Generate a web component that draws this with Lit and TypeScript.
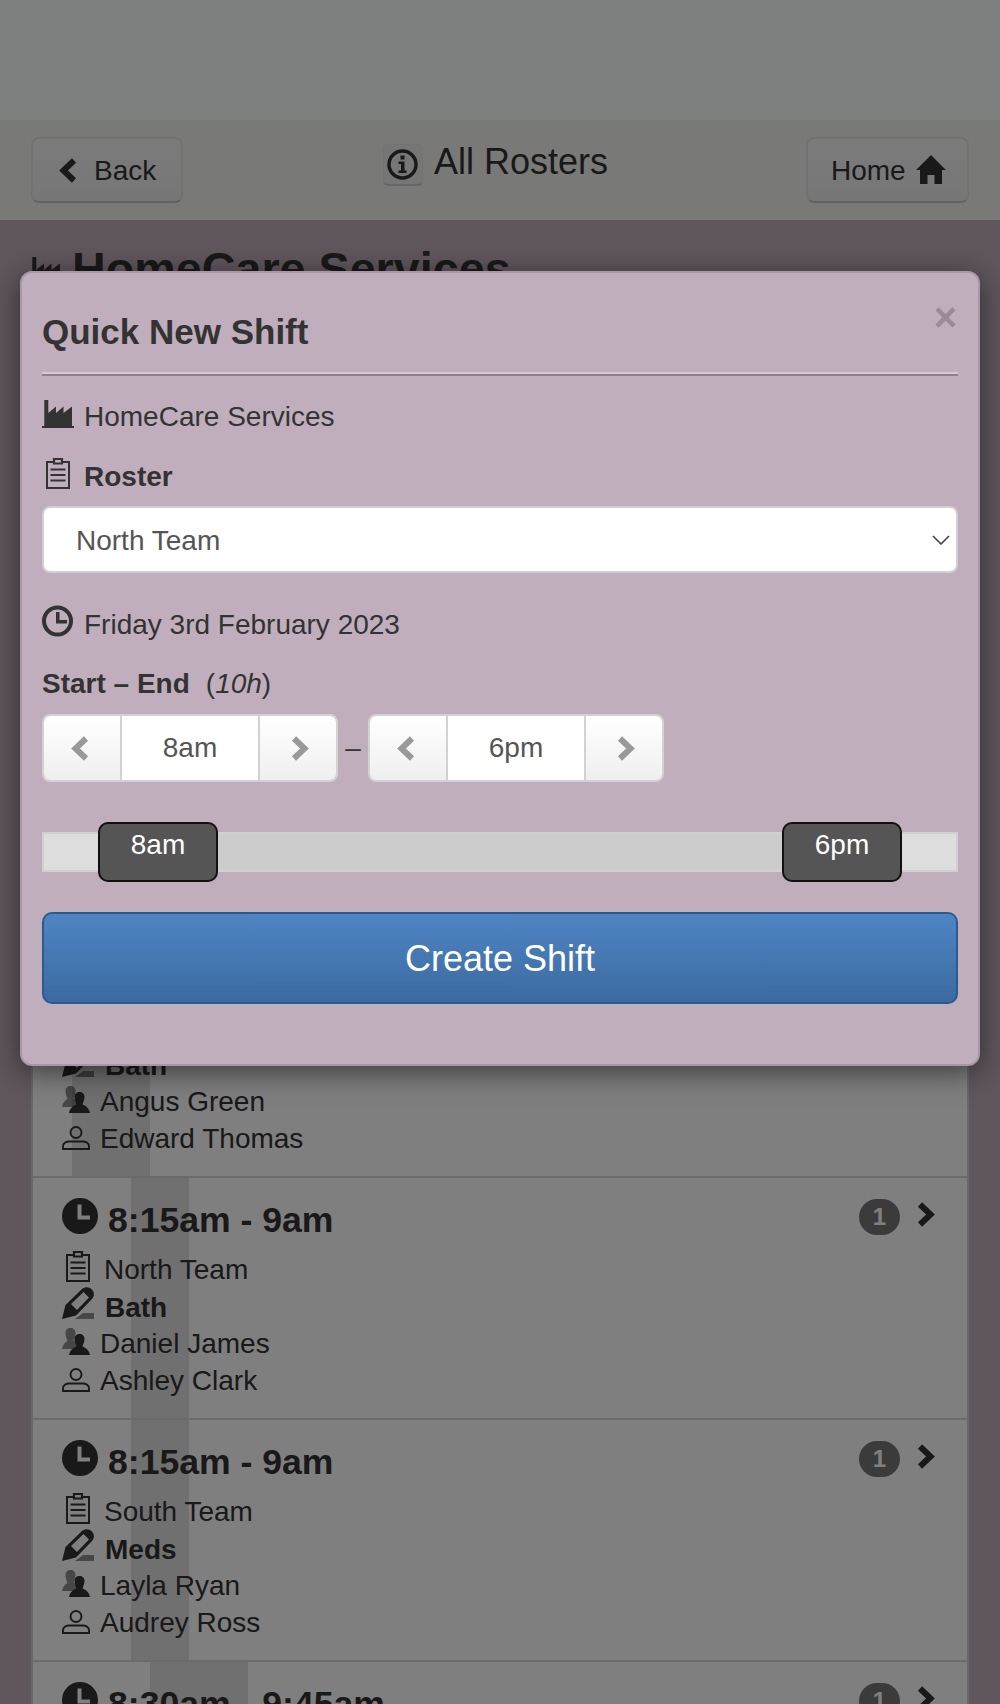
import { LitElement, html, css } from "lit";
import { customElement } from "lit/decorators.js";

const icoClockFill = html`<svg class="i" width="36" height="36" viewBox="0 0 36 36"><path fill="currentColor" fill-rule="evenodd" d="M18 0a18 18 0 1 0 0 36a18 18 0 1 0 0-36z M15.500 6.500h4v11h8.500v4H15.500z"/></svg>`;
const icoClockLine = html`<svg class="i" width="31" height="32" viewBox="0 0 31 32"><circle cx="15.500" cy="16" r="13.500" fill="none" stroke="currentColor" stroke-width="4"/><path fill="currentColor" d="M14 7h3.500v8H25v3.500H14z"/></svg>`;
const icoFactory = html`<svg class="i" width="32" height="28" viewBox="0 0 32 28"><path fill="currentColor" d="M0 28v-2h2.300V0h4v13L14 6.500V13l7.500-6.500V13L30 6.500V26h2v2z"/></svg>`;
const icoClip = html`<svg class="i" width="24" height="32" viewBox="0 0 24 32"><path fill="none" stroke="currentColor" stroke-width="2" d="M7 5H1v26h22V5H17"/><path fill="none" stroke="currentColor" stroke-width="2.200" d="M8 6.500V2h8v4.500z"/><path fill="none" stroke="currentColor" stroke-width="2" d="M4.500 12.500h15M4.500 18h15M4.500 23.500h15"/></svg>`;
const icoPencil = html`<svg class="i" width="32" height="32" viewBox="0 0 32 32"><path fill="currentColor" fill-rule="evenodd" d="M0 32 3.500 18 20 2C23-.5 27-.5 30 2.500c2.500 3 2.500 6.500 0 9.500L14 28.500zM9 17 15 23 27 10.500 21.500 5z"/><path fill="currentColor" opacity=".55" d="M13 32 21 26H32v6z"/></svg>`;
const icoUsers = html`<svg class="i" width="28" height="27" viewBox="0 0 28 27"><path fill="currentColor" opacity=".55" d="M3.500 5C3.500 2 5.500 0 8.500 0s5 2 5 5c0 3-1.500 6-2 7.500l3.500 2V21H0c.5-4 3-6.500 5.500-8C5 12 3.500 8 3.500 5z"/><path fill="currentColor" d="M12.500 11c0-3 2-5 5-5s5 2 5 5c0 3-1.500 6-2 7.500 3.500 1.500 6.500 3.500 7.500 8.500H7c1-5 4-7 7.500-8.500-.5-1.500-2-4.500-2-7.500z"/></svg>`;
const icoUser = html`<svg class="i" width="28" height="24" viewBox="0 0 28 24"><circle cx="14" cy="6.500" r="5.500" fill="none" stroke="currentColor" stroke-width="1.900"/><path fill="none" stroke="currentColor" stroke-width="1.900" d="M1 23v-3c0-2.500 3-4.500 6-4.500h14c3 0 6 2 6 4.500v3z"/></svg>`;
const chevR = (c: string) => html`<svg class="i ${c}" width="18" height="25" viewBox="0 0 18 25"><path fill="none" stroke="currentColor" stroke-width="6" d="M3 2.500 13.500 12.500 3 22.500"/></svg>`;
const chevL = (c: string) => html`<svg class="i ${c}" width="18" height="25" viewBox="0 0 18 25"><path fill="none" stroke="currentColor" stroke-width="6" d="M15 2.500 4.500 12.500 15 22.500"/></svg>`;

interface Row { time: string; team?: string; job?: string; a?: string; b?: string; from: number; to: number; }
const rows: Row[] = [
  { time: "7:30am - 8:30am", team: "North Team", job: "Bath", a: "Angus Green", b: "Edward Thomas", from: 39, to: 117 },
  { time: "8:15am - 9am", team: "North Team", job: "Bath", a: "Daniel James", b: "Ashley Clark", from: 98, to: 156 },
  { time: "8:15am - 9am", team: "South Team", job: "Meds", a: "Layla Ryan", b: "Audrey Ross", from: 98, to: 156 },
  { time: "8:30am - 9:45am", from: 117, to: 215 },
];

@customElement("app-root")
export class AppRoot extends LitElement {
  static styles = css`
    :host { display: block; position: relative; width: 1000px; height: 1704px; overflow: hidden; background: #c1aebd;
      font-family: "Liberation Sans", Arial, sans-serif; font-size: 28px; color: #333; }
    .i { display: block; flex: none; }
    .top { height: 120px; background: #f8fefa; }
    .nav { height: 100px; background: #f3f5f1; border-bottom: 2px solid #b4b4b4; display: flex; justify-content: space-between; align-items: flex-start; padding: 0 31px; }
    .btn { height: 66px; box-sizing: border-box; margin-top: 17px; display: flex; align-items: center; background: linear-gradient(#f6f6f6, #eeeeee); border: 2px solid #e4e4e4; border-bottom-color: #c4c4c4; border-radius: 8px; color: #333; }
    .btn span { padding-top: 2px; }
    .back { width: 152px; padding-left: 26px; gap: 17px; }
    .home { width: 163px; padding-left: 23px; gap: 10px; }
    .center { display: flex; align-items: flex-start; gap: 11px; margin-left: 2px; }
    .info { margin-top: 24px; width: 40px; height: 42px; box-sizing: border-box; background: #ededed; border: 1px solid #e6e6e6; border-bottom: 2px solid #cdcdcd; border-radius: 5px; display: flex; align-items: center; justify-content: center; }
    .center h3 { margin: 20px 0 0; font-size: 36px; font-weight: 400; line-height: 44px; }
    .ptitle { display: flex; align-items: center; gap: 10px; margin: 20px 0 0 30px; height: 54px; }
    .ptitle .i { margin-top: 4px; }
    .ptitle h2 { margin: 0; font-size: 46.700px; font-weight: 700; line-height: 54px; color: #333; }
    .list { margin: 640px 31px 0 31px; border: solid #d0d0d0; border-width: 0 2px; background: #fff; }
    .row { height: 240px; border-bottom: 2px solid #d6d6d6; padding: 0 32px 0 29px; display: grid; grid-template-columns: 1fr auto; align-content: start; }
    .head { display: flex; align-items: center; gap: 10px; margin-top: 18px; height: 44px; font-size: 35.600px; font-weight: 700; }
    .head .i { margin-bottom: 4px; }
    .head span { padding-top: 4px; }
    .side { display: flex; gap: 17px; margin-top: 20px; align-items: flex-start; }
    .badge { width: 41px; height: 36px; margin-top: 1px; border-radius: 18px; background: #777; color: #fff; font-weight: 700; font-size: 24px; display: flex; align-items: center; justify-content: center; }
    .chv { margin-top: 4px; }
    .lines { grid-column: 1 / 3; margin-top: 10px; }
    .ln { height: 37px; display: flex; align-items: center; line-height: 37px; }
    .ln b { font-weight: 700; padding-top: 4px; }
    .t { padding-top: 2px; }
    .g4 { margin: -6px 14px 0 4px; }
    .g11 { gap: 11px; }
    .g11 .i { margin-top: -6px; }
    .g10 { gap: 10px; }
    .g10 .up { margin-top: -2px; }
    .g10 span.t { padding-top: 2px; }
    .scrim { position: absolute; inset: 0; background: rgba(0,0,0,.5); }
    .modal { position: absolute; left: 20px; top: 271px; width: 960px; height: 795px; box-sizing: border-box; background: #c1aebd; border: 2px solid #a898a5; border-radius: 12px; box-shadow: 0 6px 30px rgba(0,0,0,.55); padding: 0 20px; color: #333; }
    .x { position: absolute; right: 21px; top: 22px; font-size: 40px; font-weight: 700; line-height: 44px; color: #9a8a97; }
    .modal h3 { margin: 36px 0 0; height: 46px; font-size: 35px; line-height: 46px; font-weight: 700; }
    .hr { height: 0; margin-top: 17px; border-top: 2px solid #d6c9d3; border-bottom: 2px solid #8f808c; }
    .m-line { height: 40px; display: flex; align-items: center; line-height: 40px; gap: 11px; }
    .m-co { margin-top: 21px; gap: 10px; }
    .m-co .i { margin-top: -6px; }
    .m-ro { margin-top: 19px; }
    .m-ro b { padding-top: 2px; }
    .m-ro .i { margin: -6px 3px 0 4px; }
    .select { height: 67px; box-sizing: border-box; margin-top: 10px; display: flex; align-items: center; justify-content: space-between; background: #fff; border: 2px solid #d0d0d0; border-radius: 8px; padding: 0 6px 0 32px; color: #555; }
    .select span { padding-top: 2px; }
    .m-da { margin-top: 31px; }
    .m-da .i { margin-top: -6px; }
    .m-da span { padding-top: 2px; }
    .m-se { margin-top: 20px; gap: 0; }
    .m-se em { margin-left: 16px; font-style: normal; }
    .m-se em i { font-style: italic; }
    .steppers { display: flex; align-items: center; margin-top: 10px; }
    .step { display: flex; height: 68px; width: 296px; box-sizing: border-box; border: 2px solid #d2d2d2; border-radius: 8px; overflow: hidden; }
    .sb { width: 76px; flex: none; background: linear-gradient(#fff, #efefef); display: flex; align-items: center; justify-content: center; color: #999; }
    .sb .pl { margin-right: 4px; }
    .sb .pr { margin-left: 4px; }
    .sv { flex: 1; background: #fff; border: solid #d2d2d2; border-width: 0 2px; display: flex; align-items: center; justify-content: center; color: #555; }
    .dash { width: 30px; text-align: center; color: #333; }
    .slider { position: relative; height: 40px; box-sizing: border-box; margin-top: 50px; background: #ddd; border: 2px solid #cfcfcf; }
    .fill { height: 100%; background: #ccc; margin: 0 116px 0 114px; }
    .h { position: absolute; top: -12px; width: 120px; height: 60px; box-sizing: border-box; background: #555; border: 2px solid #111; border-radius: 10px; color: #fff; font-size: 28px; line-height: 42px; text-align: center; }
    .create { height: 92px; box-sizing: border-box; margin-top: 40px; padding-top: 2px; background: linear-gradient(#4f84c4, #3b6a9f); border: 2px solid #2c5a8c; border-radius: 10px; display: flex; align-items: center; justify-content: center; color: #fff; font-size: 36px; }
  `;

  private renderRow(r: Row) {
    const bg = `background: linear-gradient(90deg, transparent ${r.from}px, #e0e0e0 ${r.from}px, #e0e0e0 ${r.to}px, transparent ${r.to}px)`;
    return html`<div class="row" style=${bg}>
      <div class="head">${icoClockFill}<span>${r.time}</span></div>
      <div class="side"><span class="badge">1</span>${chevR("chv")}</div>
      ${r.team ? html`<div class="lines">
        <div class="ln"><span class="g4">${icoClip}</span><span class="t">${r.team}</span></div>
        <div class="ln g11">${icoPencil}<b>${r.job}</b></div>
        <div class="ln g10"><span class="up">${icoUsers}</span><span class="t">${r.a}</span></div>
        <div class="ln g10">${icoUser}<span class="t">${r.b}</span></div>
      </div>` : ""}
    </div>`;
  }

  render() {
    return html`
      <div class="top"></div>
      <div class="nav">
        <div class="btn back">${chevL("")}<span>Back</span></div>
        <div class="center">
          <span class="info"><svg class="i" width="31" height="31" viewBox="0 0 31 31"><circle cx="15.500" cy="15.500" r="13.500" fill="none" stroke="currentColor" stroke-width="3.500"/><path fill="currentColor" d="M13.500 6.500h4v4h-4zM11.500 12.500h6v9h2v2.500h-8v-2.500h2.500v-6.500h-2.500z"/></svg></span>
          <h3>All Rosters</h3>
        </div>
        <div class="btn home"><span>Home</span><svg class="i" width="30" height="30" viewBox="0 0 30 30"><path fill="currentColor" d="M15 0 30 15h-4v14h-7.500v-9h-7v9H4V15H0z"/></svg></div>
      </div>
      <div class="ptitle">${icoFactory}<h2>HomeCare Services</h2></div>
      <div class="list">${rows.map((r) => this.renderRow(r))}</div>
      <div class="scrim"></div>
      <div class="modal">
        <span class="x">×</span>
        <h3>Quick New Shift</h3>
        <div class="hr"></div>
        <div class="m-line m-co">${icoFactory}<span>HomeCare Services</span></div>
        <div class="m-line m-ro">${icoClip}<b>Roster</b></div>
        <div class="select"><span>North Team</span><svg class="i" width="18" height="10" viewBox="0 0 18 10"><path fill="none" stroke="#444" stroke-width="1.600" d="M1 1l8 8 8-8"/></svg></div>
        <div class="m-line m-da">${icoClockLine}<span>Friday 3rd February 2023</span></div>
        <div class="m-line m-se"><b>Start – End</b><em>(<i>10h</i>)</em></div>
        <div class="steppers">
          <div class="step"><span class="sb">${chevL("pl")}</span><span class="sv">8am</span><span class="sb">${chevR("pr")}</span></div>
          <span class="dash">–</span>
          <div class="step"><span class="sb">${chevL("pl")}</span><span class="sv">6pm</span><span class="sb">${chevR("pr")}</span></div>
        </div>
        <div class="slider">
          <div class="fill"></div>
          <div class="h" style="left: 54px">8am</div>
          <div class="h" style="left: 738px">6pm</div>
        </div>
        <div class="create">Create Shift</div>
      </div>
    `;
  }
}
